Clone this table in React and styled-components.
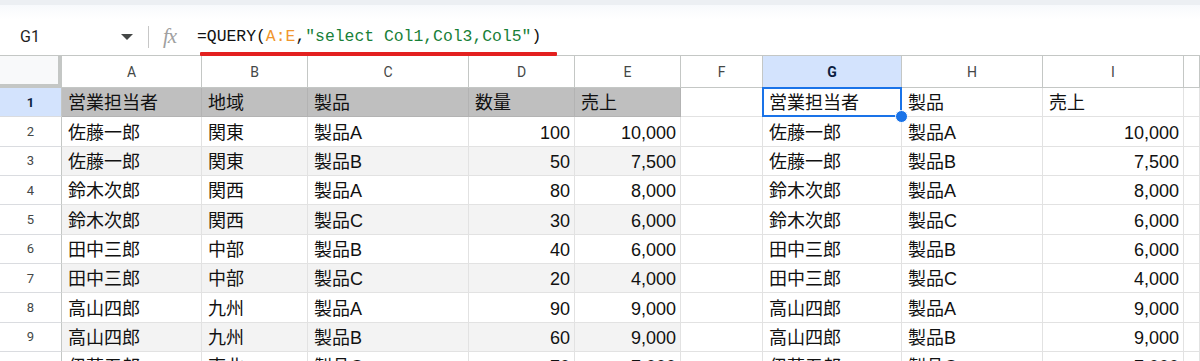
import styled, { createGlobalStyle } from "styled-components";

const GlobalStyle = createGlobalStyle`
  html, body {
    margin: 0;
    padding: 0;
    background: #fff;
  }
  body {
    font-family: "Liberation Sans", "Noto Sans CJK JP", sans-serif;
    color: #202124;
  }
`;

const COLS = ["A", "B", "C", "D", "E", "F", "G", "H", "I", ""];
const WIDTHS = "62px 140px 106px 161px 106px 106px 82px 139px 141px 141px 1fr";

const rows = [
  ["営業担当者", "地域", "製品", "数量", "売上", "", "営業担当者", "製品", "売上"],
  ["佐藤一郎", "関東", "製品A", "100", "10,000", "", "佐藤一郎", "製品A", "10,000"],
  ["佐藤一郎", "関東", "製品B", "50", "7,500", "", "佐藤一郎", "製品B", "7,500"],
  ["鈴木次郎", "関西", "製品A", "80", "8,000", "", "鈴木次郎", "製品A", "8,000"],
  ["鈴木次郎", "関西", "製品C", "30", "6,000", "", "鈴木次郎", "製品C", "6,000"],
  ["田中三郎", "中部", "製品B", "40", "6,000", "", "田中三郎", "製品B", "6,000"],
  ["田中三郎", "中部", "製品C", "20", "4,000", "", "田中三郎", "製品C", "4,000"],
  ["高山四郎", "九州", "製品A", "90", "9,000", "", "高山四郎", "製品A", "9,000"],
  ["高山四郎", "九州", "製品B", "60", "9,000", "", "高山四郎", "製品B", "9,000"],
  ["伊藤五郎", "東北", "製品C", "70", "7,000", "", "伊藤五郎", "製品C", "7,000"],
];

const NUMERIC = [3, 4, 8];

const Page = styled.div`
  width: 1200px;
  height: 361px;
  overflow: hidden;
  background: #fff;
`;

const TopStrip = styled.div`
  height: 5px;
  background: #eceff3;
`;

const FormulaBar = styled.div`
  position: relative;
  height: 50px;
  display: flex;
  align-items: center;
  padding-top: 13px;
  box-sizing: border-box;
  background: linear-gradient(#f7f9fc 0px, #ffffff 14px);
`;

const NameBox = styled.div`
  width: 100px;
  padding-left: 20px;
  font-family: Roboto, "Liberation Sans", sans-serif;
  font-size: 16px;
  color: #1f1f1f;
`;

const Caret = styled.div`
  width: 0;
  height: 0;
  border-left: 6px solid transparent;
  border-right: 6px solid transparent;
  border-top: 6px solid #444746;
  margin-left: 1px;
`;

const Divider = styled.div`
  width: 1px;
  height: 22px;
  background: #c7c7c7;
  margin-left: 15px;
`;

const Fx = styled.div`
  margin-left: 14px;
  width: 22px;
  font-family: "Liberation Serif", serif;
  font-style: italic;
  font-size: 21px;
  color: #a0a0a0;
  letter-spacing: -1px;
`;

const Formula = styled.div`
  margin-left: 12px;
  font-family: "Liberation Mono", monospace;
  font-size: 16.4px;
  color: #111;
  white-space: pre;
`;

const Token = styled.span`
  color: ${(p) => p.$color};
`;

const RedLine = styled.div`
  position: absolute;
  left: 200px;
  top: 47px;
  width: 357px;
  height: 4px;
  background: #e3201f;
  border-radius: 1px;
  z-index: 3;
`;

const Sheet = styled.div`
  display: grid;
  grid-template-columns: ${WIDTHS};
  grid-template-rows: 33px repeat(10, 29.35px);
`;

const Corner = styled.div`
  background: #f8f9fa;
  border-right: 4px solid #c4c7c5;
  border-bottom: 4px solid #c4c7c5;
  border-top: 1px solid #c4c7c5;
`;

const ColHead = styled.div`
  display: flex;
  align-items: center;
  justify-content: center;
  background: ${(p) => (p.$active ? "#d3e3fd" : "#fff")};
  border-top: 1px solid #c4c7c5;
  border-right: 1px solid #c4c7c5;
  border-bottom: 1px solid #c4c7c5;
  font-family: Roboto, "Liberation Sans", sans-serif;
  font-size: 14px;
  font-weight: ${(p) => (p.$active ? 700 : 400)};
  color: ${(p) => (p.$active ? "#0b1d3f" : "#444746")};
`;

const RowHead = styled.div`
  display: flex;
  align-items: center;
  justify-content: center;
  background: ${(p) => (p.$active ? "#d3e3fd" : "#fff")};
  border-right: 1px solid #c4c7c5;
  border-bottom: 1px solid #dadce0;
  font-family: Roboto, "Liberation Sans", sans-serif;
  font-size: 13px;
  font-weight: ${(p) => (p.$active ? 700 : 400)};
  color: ${(p) => (p.$active ? "#0b1d3f" : "#444746")};
`;

const Cell = styled.div`
  position: relative;
  display: flex;
  align-items: flex-end;
  justify-content: ${(p) => (p.$num ? "flex-end" : "flex-start")};
  padding: 0 4px 2px 6px;
  box-sizing: border-box;
  min-width: 0;
  overflow: visible;
  white-space: nowrap;
  background: ${(p) => p.$bg};
  border-right: 1px solid ${(p) => p.$line};
  border-bottom: 1px solid ${(p) => p.$line};
  font-size: 18px;
  line-height: 22px;
  color: #111;
`;

const Selection = styled.div`
  position: absolute;
  inset: -1px -1px -1px -1px;
  border: 2px solid #1a73e8;
  pointer-events: none;
  z-index: 2;
`;

const Handle = styled.div`
  position: absolute;
  right: -7px;
  bottom: -7px;
  width: 11px;
  height: 11px;
  border-radius: 50%;
  background: #1a73e8;
  border: 1px solid #fff;
  z-index: 3;
`;

function cellBg(r, c) {
  if (c <= 4) {
    if (r === 0) return "#bfbfbf";
    if (r % 2 === 0) return "#f3f3f3";
  }
  return "#fff";
}

export default function App() {
  return (
    <Page>
      <GlobalStyle />
      <TopStrip />
      <FormulaBar>
        <NameBox>G1</NameBox>
        <Caret />
        <Divider />
        <Fx>fx</Fx>
        <Formula>
          =QUERY(<Token $color="#f0962e">A:E</Token>,
          <Token $color="#188038">"select Col1,Col3,Col5"</Token>)
        </Formula>
        <RedLine />
      </FormulaBar>
      <Sheet>
        <Corner />
        {COLS.map((c, i) => (
          <ColHead key={i} $active={c === "G"}>
            {c}
          </ColHead>
        ))}
        {rows.map((row, r) => (
          <Row key={r} row={row} r={r} />
        ))}
      </Sheet>
    </Page>
  );
}

function Row({ row, r }) {
  return (
    <>
      <RowHead $active={r === 0}>{r + 1}</RowHead>
      {row.map((v, c) => {
        const bg = cellBg(r, c);
        const line = r === 0 && c <= 4 ? "#b3b3b3" : "#e2e2e2";
        return (
          <Cell key={c} $bg={bg} $line={line} $num={r > 0 && NUMERIC.includes(c)}>
            {v}
            {r === 0 && c === 6 && (
              <>
                <Selection />
                <Handle />
              </>
            )}
          </Cell>
        );
      })}
      <Cell $bg="#fff" $line="#e2e2e2" />
    </>
  );
}
